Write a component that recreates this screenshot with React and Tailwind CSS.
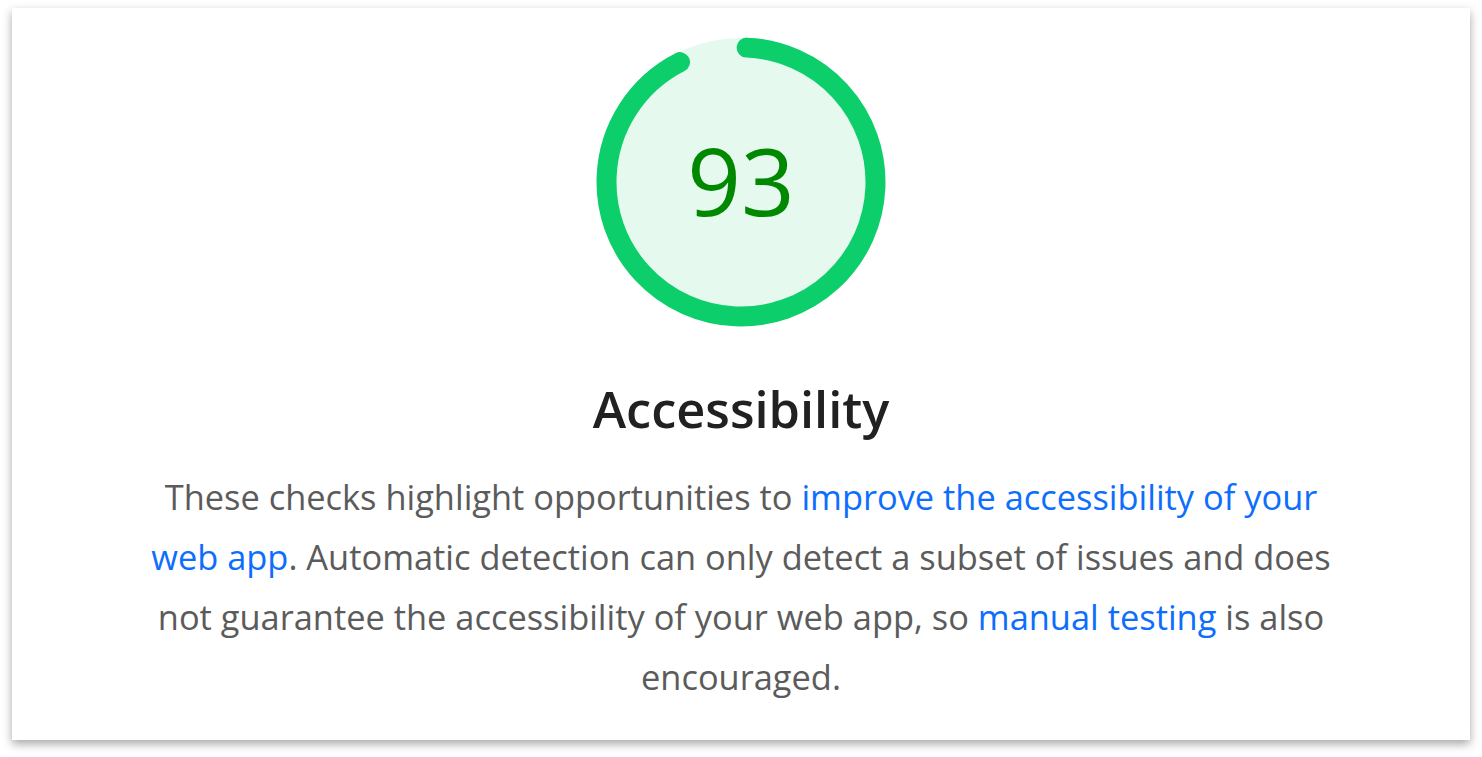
import React from "react";

const R = 134.5;
const C = 2 * Math.PI * R;

function ScoreGauge({ score = 93 }) {
  // arc begins a hair past 12 o'clock so the round cap sits at the top
  const len = C * 0.918;
  return (
    <div className="relative w-[290px] h-[290px] shrink-0">
      <svg width={290} height={290} viewBox="0 0 290 290" className="absolute inset-0">
        <circle cx={145} cy={145} r={144} fill="#e5f9ee" />
        <circle
          cx={145}
          cy={145}
          r={R}
          fill="none"
          stroke="#0ccf6b"
          strokeWidth={20}
          strokeLinecap="round"
          strokeDasharray={`${len} ${C}`}
          transform="rotate(-87.6 145 145)"
        />
      </svg>
      <div className="absolute inset-0 flex items-center justify-center">
        <span className="text-[94px] leading-none text-[#008800] font-['Open_Sans',sans-serif] -mt-1">{score}</span>
      </div>
    </div>
  );
}

export default function App() {
  return (
    <div className="w-[1482px] h-[757px] bg-white pt-2 pl-3 font-['Open_Sans',sans-serif]">
      <section className="w-[1458px] h-[732px] bg-white shadow-[0_4px_9px_rgba(0,0,0,0.35)] flex flex-col items-center pt-[29px]">
        <ScoreGauge score={93} />
        <h2 className="mt-[52px] text-[50.5px] leading-[60px] font-semibold text-[#212121]">Accessibility</h2>
        <p className="mt-[28px] w-[1210px] text-center text-[34.4px] leading-[60px] text-[#5b5b5b]">
          These checks highlight opportunities to{" "}
          <a href="#" className="text-[#0d6efd]">improve the accessibility of your web app</a>
          . Automatic detection can only detect a subset of issues and does not guarantee the accessibility of your web
          app, so{" "}
          <a href="#" className="text-[#0d6efd]">manual testing</a> is also encouraged.
        </p>
      </section>
    </div>
  );
}
